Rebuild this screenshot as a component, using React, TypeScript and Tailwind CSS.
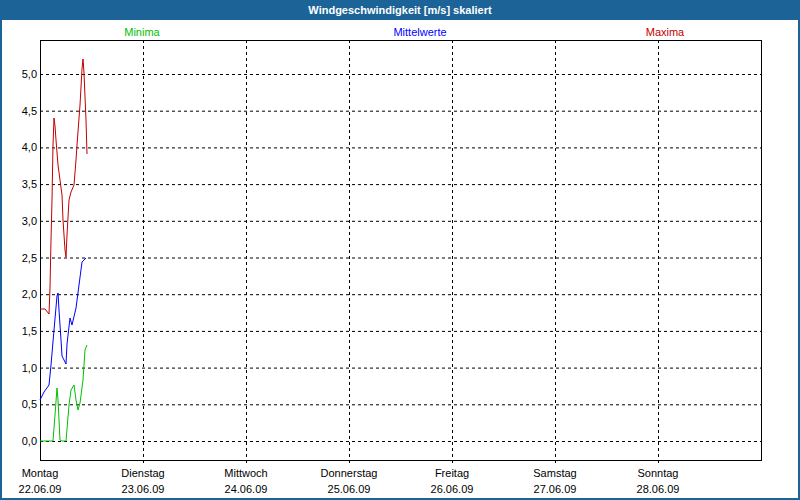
export default function App() {
  const X0 = 40, X1 = 761, Y0 = 40, Y1 = 460;
  const vx = [143, 246, 349, 452, 555, 658];
  const hy = [0, 1, 2, 3, 4, 5, 6, 7, 8, 9, 10].map((i) => 441 - i * 36.7);
  const red = "40,309 45,309 49,314 50,288 51,240 52,200 53,145 54,118 55,126 56,140 58,165 60,180 62,195 63,220 65,250 66,257 67,235 69,200 71,192 74,185 76,160 77,145 80,105 82,69 83,59 84,73 86,120 87,154";
  const blue = "40,400 44,392 49,385 51,365 54,330 57,296 58,293 59,310 61,340 62,356 66,364 67,344 70,318 72,325 76,308 79,285 82,262 86,258";
  const green = "40,441 53,441 55,415 57,388 58,400 60,440 62,441 66,441 69,405 71,390 74,385 76,400 78,410 80,403 83,380 85,350 87,345";
  const days = [["Montag", "22.06.09"], ["Dienstag", "23.06.09"], ["Mittwoch", "24.06.09"], ["Donnerstag", "25.06.09"], ["Freitag", "26.06.09"], ["Samstag", "27.06.09"], ["Sonntag", "28.06.09"]];
  const dx = [40, ...vx];
  return (
    <div className="w-[800px] h-[500px] bg-[#1c6498] flex flex-col" style={{ fontFamily: '"Liberation Sans", Arial, sans-serif' }}>
      <div className="h-[20px] flex items-center justify-center text-white font-bold text-[11px]">Windgeschwindigkeit [m/s] skaliert</div>
      <div className="flex-1 mx-[2px] mb-[2px] bg-white relative">
        <svg width="796" height="478" viewBox="2 20 796 478" className="block" fontSize="11" fontFamily='"Liberation Sans", Arial, sans-serif'>
          <text x="142" y="36" fill="#00c000" textAnchor="middle">Minima</text>
          <text x="420" y="36" fill="#0000ff" textAnchor="middle">Mittelwerte</text>
          <text x="665" y="36" fill="#c00000" textAnchor="middle">Maxima</text>
          {hy.map((y, i) => (
            <g key={i}>
              <line x1={X0} x2={X1} y1={y + 0.5} y2={y + 0.5} stroke="#000" strokeDasharray="3 3" />
              <text x="37" y={y + 4} textAnchor="end">{(i / 2).toFixed(1).replace(".", ",")}</text>
            </g>
          ))}
          {vx.map((x) => (
            <line key={x} x1={x + 0.5} x2={x + 0.5} y1={Y0} y2={Y1 + 4} stroke="#000" strokeDasharray="3 3" />
          ))}
          <rect x={X0 + 0.5} y={Y0 + 0.5} width={X1 - X0} height={Y1 - Y0} fill="none" stroke="#000" />
          <polyline points={green} fill="none" stroke="#00c000" />
          <polyline points={blue} fill="none" stroke="#0000ff" />
          <polyline points={red} fill="none" stroke="#c00000" />
          {days.map((d, i) => (
            <g key={i}>
              <text x={dx[i]} y="477" textAnchor="middle">{d[0]}</text>
              <text x={dx[i]} y="493" textAnchor="middle">{d[1]}</text>
            </g>
          ))}
        </svg>
      </div>
    </div>
  );
}
